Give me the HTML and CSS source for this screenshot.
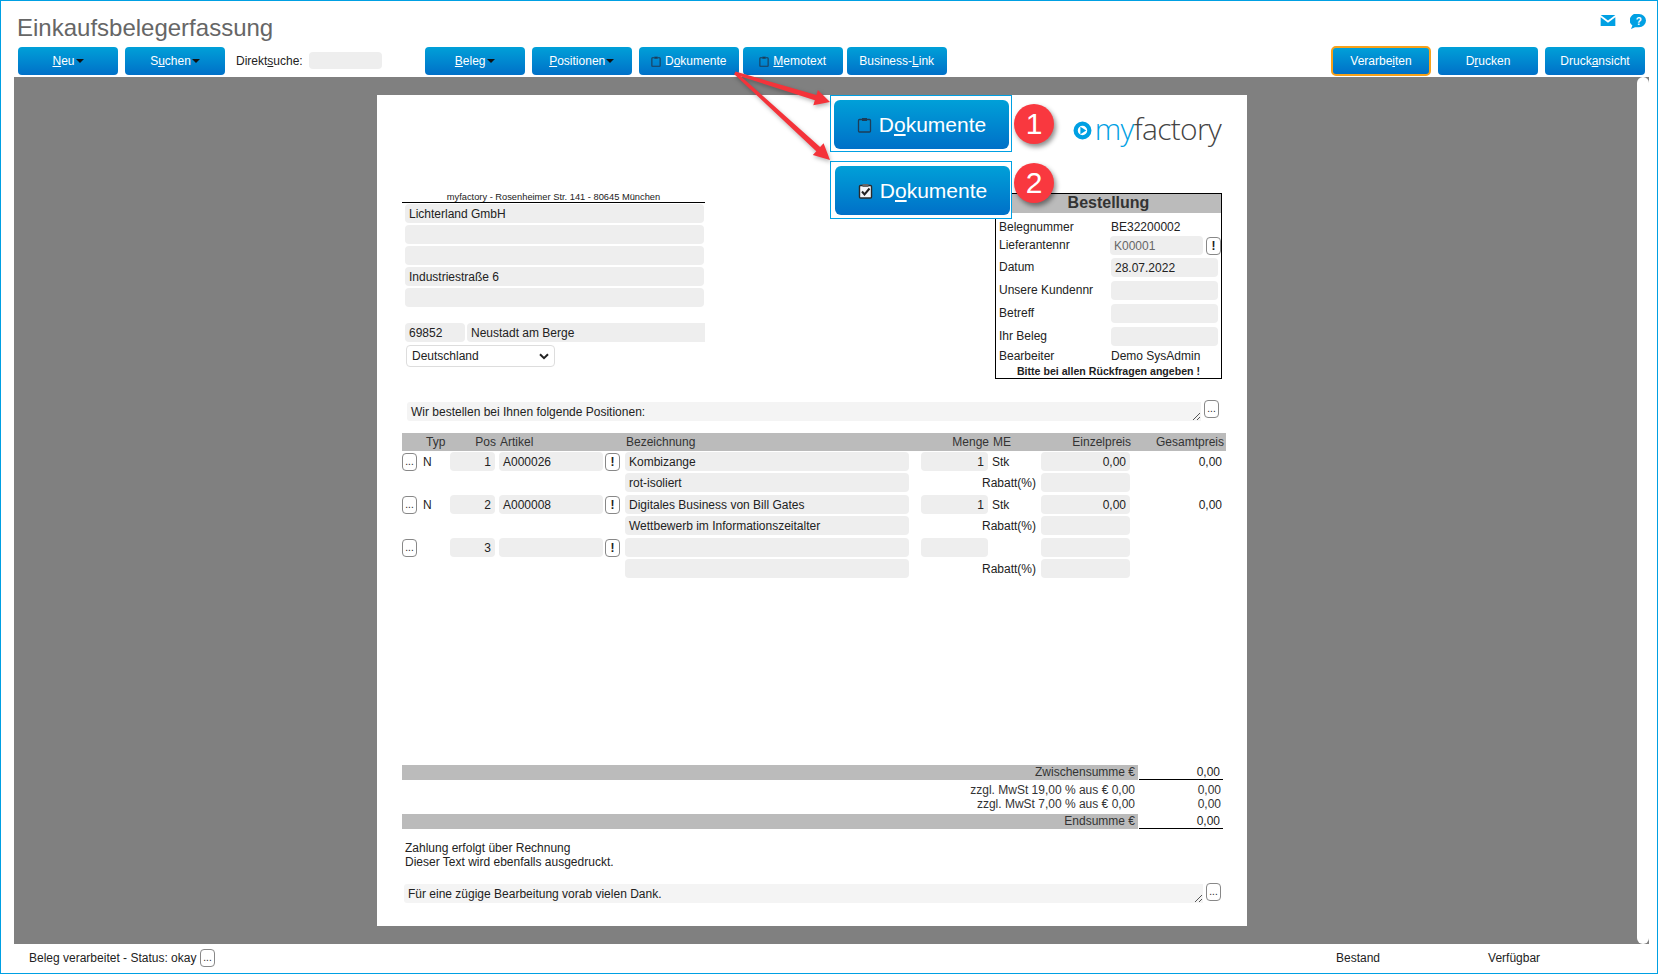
FILE: index.html
```html
<!DOCTYPE html>
<html lang="de">
<head>
<meta charset="utf-8">
<title>Einkaufsbelegerfassung</title>
<link rel="stylesheet" href="styles.css">
</head>
<body>
<div class="app">
  <header class="titlebar">
    <h1 class="title">Einkaufsbelegerfassung</h1>
    <div class="top-icons">
      <svg class="mail-icon" viewBox="0 0 16 12"><path d="M0 0h16L8 6z" fill="#00a0e3"/><path d="M0 2.4 8 8.4l8-6V12H0z" fill="#00a0e3"/></svg>
      <svg class="help-icon" viewBox="0 0 16 15"><path d="M9 0a7 6.6 0 0 1 0 13.2H5L1 15l1.4-3.6A7 6.6 0 0 1 9 0z" fill="#00a0e3"/><text x="8.7" y="10.6" class="help-q">?</text></svg>
    </div>
  </header>

  <nav class="toolbar">
    <div class="tool-group">
      <button class="btn"><span><u>N</u>eu</span><i class="caret"></i></button>
      <button class="btn"><span>S<u>u</u>chen</span><i class="caret"></i></button>
      <label class="direct">Direkt<u>s</u>uche:</label>
      <span class="direct-input"></span>
    </div>
    <div class="tool-group mid">
      <button class="btn"><span><u>B</u>eleg</span><i class="caret"></i></button>
      <button class="btn"><span><u>P</u>ositionen</span><i class="caret"></i></button>
      <button class="btn">
        <svg class="clip-s" viewBox="0 0 14 16"><path d="M4.500 2.500H2a1 1 0 0 0-1 1V14a1 1 0 0 0 1 1h10a1 1 0 0 0 1-1V3.500a1 1 0 0 0-1-1H9.500" fill="none" stroke="#1d3c57" stroke-width="1.600"/><rect x="4.500" y="1" width="5" height="3" fill="#1d3c57"/></svg>
        <span>D<u>o</u>kumente</span>
      </button>
      <button class="btn btn-tight">
        <svg class="clip-s" viewBox="0 0 14 16"><path d="M4.500 2.500H2a1 1 0 0 0-1 1V14a1 1 0 0 0 1 1h10a1 1 0 0 0 1-1V3.500a1 1 0 0 0-1-1H9.500" fill="none" stroke="#1d3c57" stroke-width="1.600"/><rect x="4.500" y="1" width="5" height="3" fill="#1d3c57"/></svg>
        <span><u>M</u>emotext</span>
      </button>
      <button class="btn btn-tight"><span>Business-<u>L</u>ink</span></button>
    </div>
    <div class="tool-group right">
      <button class="btn btn-focus"><span>Verarbe<u>i</u>ten</span></button>
      <button class="btn"><span>D<u>r</u>ucken</span></button>
      <button class="btn"><span>Druck<u>a</u>nsicht</span></button>
    </div>
  </nav>

  <main class="canvas">
    <div class="scroll-track"></div>
    <section class="doc">
      <div class="logo-row">
        <svg class="logo-mark" viewBox="0 0 18 18"><circle cx="9" cy="9" r="6.500" fill="none" stroke="#00a0e3" stroke-width="4"/><path d="M7 5.500 12.500 9 7 12.500z" fill="#00a0e3"/></svg>
        <span class="logo-text"><b>my</b>factory</span>
      </div>

      <div class="head">
        <div class="address">
          <div class="sender">myfactory - Rosenheimer Str. 141 - 80645 München</div>
          <div class="addr-fields">
            <div class="field">Lichterland GmbH</div>
            <div class="field"></div>
            <div class="field"></div>
            <div class="field">Industriestraße 6</div>
            <div class="field"></div>
          </div>
          <div class="city-row">
            <div class="field zip">69852</div>
            <div class="field city">Neustadt am Berge</div>
          </div>
          <div class="country"><span>Deutschland</span>
            <svg class="chev" viewBox="0 0 10 7"><path d="M1 1.200 5 5.200 9 1.200" fill="none" stroke="#222" stroke-width="2"/></svg>
          </div>
        </div>

        <div class="order-box">
          <div class="order-title">Bestellung</div>
          <div class="order-row r-plain"><span class="o-label">Belegnummer</span><span class="o-value">BE32200002</span></div>
          <div class="order-row r-lief"><span class="o-label up">Lieferantennr</span><div class="field lief">K00001</div><button class="mini bang lief-bang">!</button></div>
          <div class="order-row r-f r-date"><span class="o-label up">Datum</span><div class="field o-field">28.07.2022</div></div>
          <div class="order-row r-f"><span class="o-label up">Unsere Kundennr</span><div class="field o-field"></div></div>
          <div class="order-row r-f"><span class="o-label up">Betreff</span><div class="field o-field"></div></div>
          <div class="order-row r-f"><span class="o-label up">Ihr Beleg</span><div class="field o-field"></div></div>
          <div class="order-row r-plain r-bearb"><span class="o-label">Bearbeiter</span><span class="o-value">Demo SysAdmin</span></div>
          <div class="order-note">Bitte bei allen Rückfragen angeben !</div>
        </div>
      </div>

      <div class="note-row note-top">
        <div class="note">Wir bestellen bei Ihnen folgende Positionen:<svg class="grip" viewBox="0 0 9 9"><path d="M1 8 8 1M5 8 8 5" stroke="#555" stroke-width="1" fill="none"/></svg></div>
        <button class="mini up2">...</button>
      </div>

      <div class="table-head">
        <span class="h-typ">Typ</span>
        <span class="h-pos">Pos</span>
        <span class="h-art">Artikel</span>
        <span class="h-bez">Bezeichnung</span>
        <span class="h-menge">Menge</span>
        <span class="h-me">ME</span>
        <span class="h-einz">Einzelpreis</span>
        <span class="h-ges">Gesamtpreis</span>
      </div>

      <div class="pos">
        <button class="mini c-btn">...</button><span class="c-typ">N</span>
        <div class="field c-pos num">1</div><div class="field c-art">A000026</div><button class="mini bang c-bang">!</button>
        <div class="field c-bez">Kombizange</div><div class="field c-menge num">1</div><span class="c-me">Stk</span>
        <div class="field c-einz num">0,00</div><span class="c-ges">0,00</span>
        <div class="field c-bez2">rot-isoliert</div><span class="c-rab">Rabatt(%)</span><div class="field c-rabf"></div>
      </div>
      <div class="pos">
        <button class="mini c-btn">...</button><span class="c-typ">N</span>
        <div class="field c-pos num">2</div><div class="field c-art">A000008</div><button class="mini bang c-bang">!</button>
        <div class="field c-bez">Digitales Business von Bill Gates</div><div class="field c-menge num">1</div><span class="c-me">Stk</span>
        <div class="field c-einz num">0,00</div><span class="c-ges">0,00</span>
        <div class="field c-bez2">Wettbewerb im Informationszeitalter</div><span class="c-rab">Rabatt(%)</span><div class="field c-rabf"></div>
      </div>
      <div class="pos">
        <button class="mini c-btn">...</button><span class="c-typ"></span>
        <div class="field c-pos num">3</div><div class="field c-art"></div><button class="mini bang c-bang">!</button>
        <div class="field c-bez"></div><div class="field c-menge num"></div><span class="c-me"></span>
        <div class="field c-einz num"></div><span class="c-ges"></span>
        <div class="field c-bez2"></div><span class="c-rab">Rabatt(%)</span><div class="field c-rabf"></div>
      </div>

      <div class="totals">
        <div class="t-row t-bar"><span class="t-label">Zwischensumme €</span><span class="t-val">0,00</span></div>
        <div class="t-row t-line t-first"><span class="t-label">zzgl. MwSt 19,00 % aus € 0,00</span><span class="t-val">0,00</span></div>
        <div class="t-row t-line"><span class="t-label">zzgl. MwSt 7,00 % aus € 0,00</span><span class="t-val">0,00</span></div>
        <div class="t-row t-bar t-end"><span class="t-label">Endsumme €</span><span class="t-val">0,00</span></div>
      </div>

      <p class="pay">Zahlung erfolgt über Rechnung<br>Dieser Text wird ebenfalls ausgedruckt.</p>

      <div class="note-row note-bottom">
        <div class="note">Für eine zügige Bearbeitung vorab vielen Dank.<svg class="grip" viewBox="0 0 9 9"><path d="M1 8 8 1M5 8 8 5" stroke="#555" stroke-width="1" fill="none"/></svg></div>
        <button class="mini up1">...</button>
      </div>
    </section>
  </main>

  <footer class="status">
    <span class="st-text">Beleg verarbeitet - Status: okay</span>
    <button class="mini st-btn">...</button>
    <span class="st-bestand">Bestand</span>
    <span class="st-verf">Verfügbar</span>
  </footer>

  <div class="callout c1">
    <button class="big-btn b1">
      <svg class="clip-l" viewBox="0 0 14 16"><path d="M4.500 2.500H2a1 1 0 0 0-1 1V14a1 1 0 0 0 1 1h10a1 1 0 0 0 1-1V3.500a1 1 0 0 0-1-1H9.500" fill="none" stroke="#1d3c57" stroke-width="1.300"/><rect x="4.500" y="1" width="5" height="3" fill="#1d3c57"/></svg>
      <span>D<u>o</u>kumente</span>
    </button>
  </div>
  <div class="callout c2">
    <button class="big-btn b2">
      <svg class="clip-l" viewBox="0 0 14 16"><rect x="1" y="2.500" width="12" height="12.500" rx="1" fill="#f4f6f8" stroke="#2a2a2a" stroke-width="1.400"/><rect x="4" y="1" width="6" height="3" fill="#666"/><path d="M3.500 8.500 6 11.500 11 5.500" fill="none" stroke="#222" stroke-width="2"/></svg>
      <span>D<u>o</u>kumente</span>
    </button>
  </div>
  <div class="badge bd1">1</div>
  <div class="badge bd2">2</div>

  <svg class="arrows" viewBox="0 0 1658 974">
    <g fill="#f4333a" stroke="none" class="arrow-g">
      <path d="M735.400 71.600 L816.400 94.900 L817.900 89.900 L830 102 L813.300 105.300 L814.800 100.300 L734.600 74.400z"/>
      <path d="M736 71.900 L820.100 147.100 L823.600 143.300 L830 160 L812.800 155.100 L816.300 151.300 L734 74.100z"/>
    </g>
  </svg>
</div>
</body>
</html>
```

FILE: styles.css
```css
* { box-sizing: border-box; }
html, body { margin: 0; padding: 0; }
body {
  width: 1658px;
  height: 974px;
  overflow: hidden;
  background: #fff;
  font-family: "Liberation Sans", Arial, sans-serif;
  font-size: 12px;
  color: #222;
}
u { text-decoration: underline; }

.app {
  position: relative;
  width: 1658px;
  height: 974px;
  border: 1px solid #00a0e3;
  display: flex;
  flex-direction: column;
}

/* Title */
.titlebar {
  height: 46px;
  display: flex;
  justify-content: space-between;
  padding: 13px 11px 0 16px;
}
.title {
  margin: 0;
  font-size: 24px;
  line-height: 27px;
  font-weight: 400;
  color: #666;
}
.top-icons { display: flex; align-items: flex-start; gap: 14px; padding-top: 2px; }
.mail-icon { width: 16px; height: 11px; margin-top: -1px; }
.help-icon { width: 16px; height: 15px; margin-top: -2px; }
.help-q { font: 700 10px "Liberation Sans", sans-serif; fill: #fff; text-anchor: middle; }

/* Toolbar */
.toolbar {
  height: 30px;
  display: flex;
  padding-left: 17px;
}
.tool-group { display: flex; align-items: flex-start; gap: 7px; }
.tool-group.mid { margin-left: 43px; }
.tool-group.mid .btn-tight { margin-left: -3px; }
.tool-group.right { margin-left: auto; padding-right: 12px; }

.btn {
  width: 100px;
  height: 28px;
  border: 0;
  border-radius: 4px;
  padding: 0;
  background: linear-gradient(#00a0d8, #0070c8);
  color: #fff;
  font-family: "Liberation Sans", Arial, sans-serif;
  font-size: 12px;
  display: flex;
  align-items: center;
  justify-content: center;
  gap: 0;
}
.caret {
  display: inline-block;
  width: 0;
  height: 0;
  margin-left: 1px;
  border-left: 4px solid transparent;
  border-right: 4px solid transparent;
  border-top: 4px solid #111;
}
.btn-focus {
  height: 30px;
  margin-top: -1px;
  border: 2px solid #f7a11a;
  border-radius: 5px;
}
.clip-s { width: 10px; height: 11px; margin-right: 4px; }
.direct { margin: 7px 0 0 4px; line-height: 14px; color: #222; }
.direct-input {
  width: 73px;
  height: 17px;
  margin: 5px 0 0 -1px;
  border-radius: 4px;
  background: #eee;
}

/* Canvas */
.canvas {
  position: relative;
  height: 867px;
  margin: 0 8px 0 13px;
  background: #808080;
  overflow: hidden;
}
.scroll-track {
  position: absolute;
  top: 0;
  right: 0;
  bottom: 0;
  width: 12px;
  background: #fff;
  border-radius: 6px;
}
.doc {
  width: 870px;
  height: 831px;
  margin: 18px 0 0 363px;
  padding-top: 20px;
  background: #fff;
}

.logo-row {
  height: 28px;
  display: flex;
  align-items: center;
  justify-content: flex-end;
  padding-right: 26px;
  gap: 3px;
}
.logo-mark { width: 19px; height: 19px; margin-top: 3px; }
.logo-text {
  font-family: "Open Sans", "Liberation Sans", sans-serif;
  font-size: 30px;
  line-height: 28px;
  letter-spacing: -0.7px;
  font-weight: 300;
  color: #444;
}
.logo-text b { font-weight: 300; color: #00a0e3; }

.field {
  height: 19px;
  line-height: 21px;
  padding: 0 4px;
  border-radius: 4px;
  background: #eee;
  color: #222;
  white-space: nowrap;
  overflow: hidden;
}
.num { text-align: right; }

/* Head */
.head {
  display: flex;
  justify-content: space-between;
  margin-top: 48px;
  padding: 0 25px 0 25px;
  align-items: flex-start;
}
.address { width: 303px; }
.sender {
  height: 11px;
  font-size: 9.3px;
  line-height: 13px;
  text-align: center;
  border-bottom: 1px solid #000;
  box-sizing: content-box;
}
.addr-fields {
  display: flex;
  flex-direction: column;
  gap: 2px;
  margin: 1px 1px 0 3px;
}
.city-row { display: flex; gap: 2px; margin: 16px 0 0 3px; }
.zip { width: 60px; }
.city { flex: 1; border-radius: 4px 0 0 4px; }
.country {
  width: 149px;
  height: 22px;
  margin: 3px 0 0 4px;
  padding: 0 5px;
  border: 1px solid #ddd;
  border-radius: 4px;
  display: flex;
  align-items: center;
  justify-content: space-between;
  background: #fff;
}
.chev { width: 10px; height: 7px; }

.order-box {
  width: 227px;
  height: 186px;
  margin-top: 2px;
  border: 1px solid #000;
  padding: 0 0 0 3px;
  display: flex;
  flex-direction: column;
}
.order-title {
  height: 19px;
  margin-left: -3px;
  background: #bbb;
  color: #333;
  font-size: 16px;
  font-weight: 700;
  line-height: 18px;
  text-align: center;
  flex: none;
}
.order-row { display: flex; align-items: center; flex: none; }
.o-label { width: 112px; flex: none; color: #222; }
.o-label.up { margin-top: -2px; }
.o-value { color: #222; }
.r-plain { height: 16px; margin-top: 6px; }
.r-lief { height: 19px; margin-top: 1px; }
.r-lief .o-label { width: 111px; }
.lief { width: 94px; color: #666; }
.lief-bang { width: 14px; margin-left: 3px; }
.r-f { height: 19px; margin-top: 4px; }
.r-date { margin-top: 3px; }
.o-field { width: 107px; }
.r-bearb { margin-top: 2px; }
.order-note {
  text-align: center;
  font-size: 10.6px;
  font-weight: 700;
  line-height: 13px;
  margin-top: 1px;
  margin-left: -3px;
  color: #222;
}

.mini {
  width: 15px;
  height: 18px;
  padding: 0;
  border: 1px solid #888;
  border-radius: 4px;
  background: #fff;
  color: #222;
  font-family: "Liberation Sans", Arial, sans-serif;
  font-size: 10px;
  line-height: 16px;
  flex: none;
}
.bang { font-size: 12px; font-weight: 700; }

/* Notes */
.note-row { display: flex; gap: 3px; padding-left: 30px; }
.note-top { margin-top: 23px; }
.note {
  position: relative;
  width: 794px;
  height: 19px;
  line-height: 21px;
  padding-left: 4px;
  background: #f4f4f4;
  border-radius: 3px 0 0 3px;
  color: #222;
}
.grip { position: absolute; right: 0; bottom: 0; width: 9px; height: 9px; }
.up2 { margin-top: -2px; }
.up1 { margin-top: -1px; }
.note-bottom { padding-left: 27px; margin-top: 15px; }
.note-bottom .note { width: 799px; padding-left: 4px; }

/* Table */
.table-head {
  height: 18px;
  margin: 12px 21px 1px 25px;
  background: #bbb;
  line-height: 19px;
  color: #333;
  display: grid;
  grid-template-columns: 24px 70px 4px 126px 363px 4px 17px 121px 93px;
  grid-template-rows: 18px;
  white-space: nowrap;
}
.table-head span { grid-row: 1; }
.h-typ { grid-column: 2; }
.h-pos { grid-column: 2; justify-self: end; }
.h-art { grid-column: 4; }
.h-bez { grid-column: 5; }
.h-menge { grid-column: 5; justify-self: end; }
.h-me { grid-column: 7; }
.h-einz { grid-column: 8; justify-self: end; }
.h-ges { grid-column: 9; justify-self: end; }

.pos {
  margin: 0 0 3px 25px;
  display: grid;
  grid-template-columns: 15px 33px 49px 106px 20px 296px 71px 49px 89px 92px;
  grid-template-rows: 19px 19px;
  row-gap: 2px;
  align-items: center;
}
.pos .c-btn, .pos .c-typ, .pos .c-pos, .pos .c-art, .pos .c-bang,
.pos .c-bez, .pos .c-menge, .pos .c-me, .pos .c-einz, .pos .c-ges { grid-row: 1; }
.c-btn { grid-column: 1; }
.c-typ { grid-column: 2; padding: 1px 0 0 6px; }
.c-pos { grid-column: 3; width: 45px; }
.c-art { grid-column: 4; width: 104px; }
.c-bang { grid-column: 5; margin: 0; }
.c-bez { grid-column: 6; width: 284px; }
.c-menge { grid-column: 7; width: 67px; }
.c-me { grid-column: 8; padding-top: 1px; }
.c-einz { grid-column: 9; width: 89px; }
.c-ges { grid-column: 10; text-align: right; padding-top: 1px; }
.c-bez2 { grid-column: 6; grid-row: 2; width: 284px; }
.c-rab { grid-column: 7 / span 2; grid-row: 2; text-align: right; padding: 1px 5px 0 0; }
.c-rabf { grid-column: 9; grid-row: 2; width: 89px; }

/* Totals */
.totals { margin: 187px 24px 0 25px; }
.t-row { display: flex; }
.t-label { width: 736px; padding-right: 3px; text-align: right; flex: none; }
.t-val { width: 84px; padding-right: 3px; text-align: right; flex: none; margin-left: 1px; }
.t-bar { height: 15px; line-height: 15px; margin: 0; }
.t-bar .t-label { background: #bbb; color: #333; }
.t-bar .t-val { border-bottom: 1px solid #000; height: 15px; line-height: 15px; }
.t-line { height: 14px; line-height: 14px; color: #333; }
.t-line .t-val { padding-right: 2px; }
.t-first { margin-top: 3px; }
.t-end { margin-top: 3px; }

.pay {
  margin: 12px 0 0 28px;
  line-height: 14px;
  color: #222;
}

/* Status */
.status {
  height: 29px;
  display: flex;
  align-items: center;
  padding-left: 28px;
  padding-bottom: 1px;
}
.st-text { width: 171px; }
.st-btn { margin: 0; }
.st-bestand { margin-left: 1121px; }
.st-verf { margin-left: 108px; }

/* Annotation overlay */
.callout {
  position: absolute;
  left: 829px;
  width: 182px;
  border: 1px solid #00a0e3;
  background: #fff;
}
.c1 { top: 94px; height: 57px; }
.c2 { top: 160px; height: 58px; }
.big-btn {
  position: absolute;
  width: 175px;
  height: 49px;
  border: 0;
  border-radius: 6px;
  padding: 0;
  background: linear-gradient(#00a0d8, #0070c8);
  color: #fff;
  font-family: "Liberation Sans", Arial, sans-serif;
  font-size: 21px;
  display: flex;
  align-items: center;
  justify-content: center;
  gap: 7px;
}
.b1 { left: 3px; top: 4px; }
.b2 { left: 4px; top: 4px; }
.clip-l { width: 15px; height: 16px; }
.badge {
  position: absolute;
  left: 1013px;
  width: 40px;
  height: 40px;
  border-radius: 50%;
  background: #f9383f;
  color: #fff;
  font-size: 30px;
  line-height: 40px;
  text-align: center;
  box-shadow: 2px 3px 5px rgba(0,0,0,.45);
}
.bd1 { top: 103px; }
.bd2 { top: 162px; }
.arrows {
  position: absolute;
  left: -1px;
  top: -1px;
  width: 1658px;
  height: 974px;
  pointer-events: none;
}
.arrow-g { filter: drop-shadow(1px 2px 2px rgba(0,0,0,.3)); }
```
